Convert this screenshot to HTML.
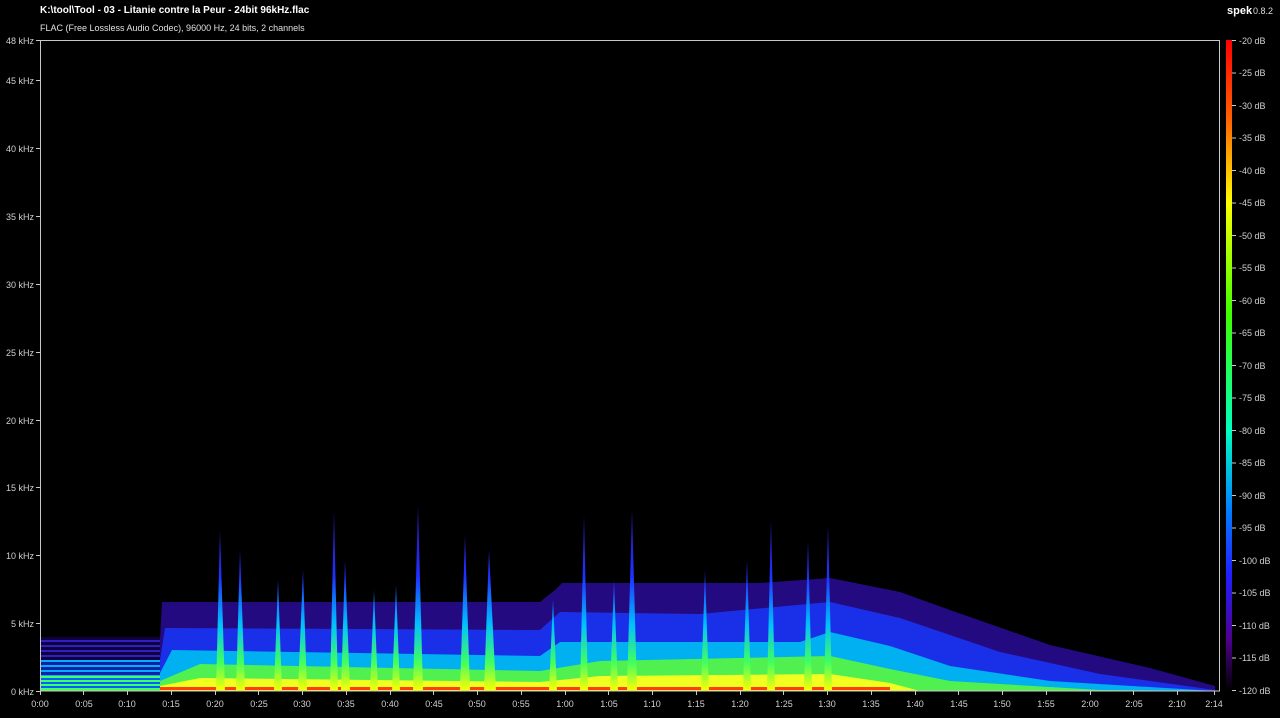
<!DOCTYPE html>
<html><head><meta charset="utf-8"><style>
html,body{margin:0;padding:0;background:#000;width:1280px;height:718px;overflow:hidden}
svg{display:block}
text{font-family:"Liberation Sans",sans-serif;font-size:9px;fill:#d0d0d0}
</style></head><body>
<svg width="1280" height="718" viewBox="0 0 1280 718">
<defs>
<linearGradient id="cb" x1="0" y1="40" x2="0" y2="691" gradientUnits="userSpaceOnUse">
<stop offset="0" stop-color="#ff0000"/><stop offset="0.12" stop-color="#ff6000"/>
<stop offset="0.25" stop-color="#ffff00"/><stop offset="0.42" stop-color="#40ff00"/>
<stop offset="0.6" stop-color="#00ffc0"/><stop offset="0.72" stop-color="#0080ff"/>
<stop offset="0.82" stop-color="#2020ff"/><stop offset="0.92" stop-color="#500090"/>
<stop offset="1" stop-color="#000000"/></linearGradient>
<linearGradient id="sp" x1="0" y1="500" x2="0" y2="691" gradientUnits="userSpaceOnUse">
<stop offset="0" stop-color="#3010a0"/><stop offset="0.4" stop-color="#2030ff"/>
<stop offset="0.65" stop-color="#00c0ff"/><stop offset="0.85" stop-color="#40ff60"/>
<stop offset="1" stop-color="#ffff00"/></linearGradient>
<pattern id="h1" width="6" height="5" patternUnits="userSpaceOnUse"><rect width="6" height="5" fill="#100040"/><rect width="6" height="2" fill="#3020c0"/></pattern>
<pattern id="h2" width="6" height="5" patternUnits="userSpaceOnUse"><rect width="6" height="5" fill="#1020a0"/><rect width="6" height="2" fill="#00b0ff"/></pattern>
<pattern id="h3" width="6" height="4" patternUnits="userSpaceOnUse"><rect width="6" height="4" fill="#0060ff"/><rect width="6" height="2" fill="#40ff60"/></pattern>
</defs>
<text x="40" y="13" style="font-weight:bold;font-size:10px;fill:#fff">K:\tool\Tool - 03 - Litanie contre la Peur - 24bit 96kHz.flac</text>
<text x="40" y="31" style="fill:#e0e0e0">FLAC (Free Lossless Audio Codec), 96000 Hz, 24 bits, 2 channels</text>
<text x="1227" y="14" style="font-weight:bold;font-size:11px;fill:#fff">spek</text>
<text x="1253" y="14" style="fill:#ddd">0.8.2</text>

<polygon fill="#240a80" points="40,691 40,638 160,638 162,602 540,602 555,590 562,583 760,583 830,578 900,592 950,610 1050,645 1150,668 1215,686 1215,691"/>
<polygon fill="#1a30e8" points="40,691 40,660 160,660 165,628 540,630 560,612 700,614 830,602 900,618 1000,652 1100,674 1215,690 1215,691"/>
<polygon fill="#00b0f0" points="40,691 40,676 160,673 172,650 540,656 560,642 800,642 830,632 890,646 950,666 1050,681 1215,691"/>
<polygon fill="#50f050" points="40,691 40,685 160,681 200,664 540,671 600,661 830,656 890,669 950,681 1100,690 1215,691"/>
<polygon fill="#f0ff20" points="160,691 160,686 200,678 540,682 600,676 830,674 890,683 920,691"/>
<rect x="160" y="687" width="730" height="3" fill="#ff4000"/>
<rect x="40" y="637" width="120" height="23" fill="url(#h1)"/>
<rect x="40" y="660" width="120" height="16" fill="url(#h2)"/>
<rect x="40" y="676" width="120" height="14" fill="url(#h3)"/>
<g fill="url(#sp)">
<polygon points="216,691 220,530 225,691"/><polygon points="236,691 240,550 245,691"/>
<polygon points="274,691 278,580 282,691"/><polygon points="298,691 303,570 307,691"/>
<polygon points="330,691 334,510 338,691"/><polygon points="341,691 345,560 350,691"/>
<polygon points="370,691 374,590 378,691"/><polygon points="392,691 396,585 400,691"/>
<polygon points="413,691 418,505 423,691"/><polygon points="460,691 465,535 470,691"/>
<polygon points="484,691 489,550 496,691"/><polygon points="549,691 553,600 557,691"/>
<polygon points="580,691 584,515 588,691"/><polygon points="627,691 632,510 637,691"/>
<polygon points="701,691 705,570 709,691"/><polygon points="743,691 747,560 751,691"/>
<polygon points="767,691 771,520 775,691"/><polygon points="804,691 808,540 812,691"/>
<polygon points="824,691 828,525 832,691"/><polygon points="610,691 614,580 618,691"/>
</g>

<rect x="40.5" y="40.5" width="1179" height="650.5" fill="none" stroke="#c8c8c8" stroke-width="1"/>
<rect x="1226" y="40" width="6" height="651" fill="url(#cb)"/>
<g stroke="#c8c8c8">
<path d="M36 40.5H40M36 80.5H40M36 148.5H40M36 216.5H40M36 284.5H40M36 352.5H40M36 420.5H40M36 487.5H40M36 555.5H40M36 623.5H40M36 691.5H40"/>
<path d="M1232 40.5h4M1232 73h4M1232 105.5h4M1232 138h4M1232 170.5h4M1232 203h4M1232 235.5h4M1232 268h4M1232 300.5h4M1232 333h4M1232 365.5h4M1232 398h4M1232 430.5h4M1232 463h4M1232 495.5h4M1232 528h4M1232 560.5h4M1232 593h4M1232 625.5h4M1232 658h4M1232 690.5h4"/>
<path d="M40.5 691v4M83.5 691v4M127.5 691v4M171.5 691v4M215.5 691v4M258.5 691v4M302.5 691v4M346.5 691v4M390.5 691v4M433.5 691v4M477.5 691v4M521.5 691v4M565.5 691v4M608.5 691v4M652.5 691v4M696.5 691v4M740.5 691v4M783.5 691v4M827.5 691v4M871.5 691v4M915.5 691v4M958.5 691v4M1002.5 691v4M1046.5 691v4M1090.5 691v4M1133.5 691v4M1177.5 691v4M1214.5 691v4"/>
</g>
<g text-anchor="end">
<text x="34" y="44">48 kHz</text><text x="34" y="84">45 kHz</text><text x="34" y="152">40 kHz</text>
<text x="34" y="220">35 kHz</text><text x="34" y="288">30 kHz</text><text x="34" y="356">25 kHz</text>
<text x="34" y="424">20 kHz</text><text x="34" y="491">15 kHz</text><text x="34" y="559">10 kHz</text>
<text x="34" y="627">5 kHz</text><text x="34" y="695">0 kHz</text>
</g>
<g>
<text x="1239" y="44">-20 dB</text><text x="1239" y="76">-25 dB</text><text x="1239" y="109">-30 dB</text>
<text x="1239" y="141">-35 dB</text><text x="1239" y="174">-40 dB</text><text x="1239" y="206">-45 dB</text>
<text x="1239" y="239">-50 dB</text><text x="1239" y="271">-55 dB</text><text x="1239" y="304">-60 dB</text>
<text x="1239" y="336">-65 dB</text><text x="1239" y="369">-70 dB</text><text x="1239" y="401">-75 dB</text>
<text x="1239" y="434">-80 dB</text><text x="1239" y="466">-85 dB</text><text x="1239" y="499">-90 dB</text>
<text x="1239" y="531">-95 dB</text><text x="1239" y="564">-100 dB</text><text x="1239" y="596">-105 dB</text>
<text x="1239" y="629">-110 dB</text><text x="1239" y="661">-115 dB</text><text x="1239" y="694">-120 dB</text>
</g>
<g text-anchor="middle">
<text x="40" y="707">0:00</text><text x="84" y="707">0:05</text><text x="127" y="707">0:10</text>
<text x="171" y="707">0:15</text><text x="215" y="707">0:20</text><text x="259" y="707">0:25</text>
<text x="302" y="707">0:30</text><text x="346" y="707">0:35</text><text x="390" y="707">0:40</text>
<text x="434" y="707">0:45</text><text x="477" y="707">0:50</text><text x="521" y="707">0:55</text>
<text x="565" y="707">1:00</text><text x="609" y="707">1:05</text><text x="652" y="707">1:10</text>
<text x="696" y="707">1:15</text><text x="740" y="707">1:20</text><text x="784" y="707">1:25</text>
<text x="827" y="707">1:30</text><text x="871" y="707">1:35</text><text x="915" y="707">1:40</text>
<text x="959" y="707">1:45</text><text x="1002" y="707">1:50</text><text x="1046" y="707">1:55</text>
<text x="1090" y="707">2:00</text><text x="1134" y="707">2:05</text><text x="1177" y="707">2:10</text>
<text x="1214" y="707">2:14</text>
</g>
</svg>
</body></html>
